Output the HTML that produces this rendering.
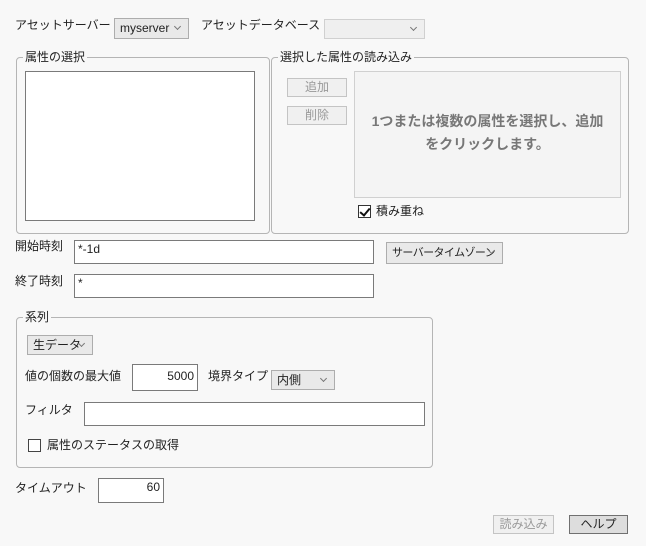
<!DOCTYPE html>
<html><head><meta charset="utf-8"><style>
body{margin:0;width:646px;height:546px;background:#f8f8f8;font-family:"Liberation Sans","Noto Sans CJK JP",sans-serif;font-size:12px;color:#222;position:relative;overflow:hidden}
.a{position:absolute;white-space:nowrap}
.lbl{line-height:16px}
.in{position:absolute;background:#fff;border:1px solid #7a7a7a;box-sizing:border-box;font-size:12px;line-height:16px;padding:0 3px}
.dd{position:absolute;background:#e9e9e9;border:1px solid #adadad;box-sizing:border-box;font-size:12px;line-height:17px;padding-left:5px;white-space:nowrap;overflow:hidden}
.dd:after{content:"";position:absolute;right:8px;top:5px;width:4px;height:4px;border-right:1px solid #777;border-bottom:1px solid #777;transform:rotate(45deg)}
.grp{position:absolute;border:1px solid #b5b5b5;border-radius:4px;box-sizing:border-box}
.gl{position:absolute;top:-9px;left:6px;background:#f8f8f8;padding:0 2px;line-height:16px}
.btn{position:absolute;box-sizing:border-box;text-align:center;font-size:12px;line-height:16px}
.cb{position:absolute;width:13px;height:13px;border:1px solid #333;background:#fff;box-sizing:border-box}
</style></head><body>
<div class="a lbl" style="left:15px;top:17px">アセットサーバー</div>
<div class="dd" style="left:114px;top:18px;width:75px;height:21px;line-height:19px">myserver</div>
<div class="a lbl" style="left:201px;top:17px">アセットデータベース</div>
<div class="dd" style="left:324px;top:19px;width:101px;height:20px;background:#efefef;border-color:#d0d0d0"></div>

<div class="grp" style="left:16px;top:57px;width:254px;height:177px"><div class="gl">属性の選択</div></div>
<div class="in" style="left:25px;top:71px;width:230px;height:150px"></div>

<div class="grp" style="left:271px;top:57px;width:358px;height:177px"><div class="gl">選択した属性の読み込み</div></div>
<div class="btn" style="left:287px;top:78px;width:60px;height:19px;border:1px solid #c4c4c4;color:#999;background:#f0f0f0">追加</div>
<div class="btn" style="left:287px;top:106px;width:60px;height:19px;border:1px solid #c4c4c4;color:#999;background:#f0f0f0">削除</div>
<div class="a" style="left:354px;top:71px;width:267px;height:127px;border:1px solid #d0d0d0;box-sizing:border-box;background:#f4f4f4;text-align:center;color:#777;font-weight:bold;font-size:14px;line-height:23px;padding-top:38px">1つまたは複数の属性を選択し、追加<br>をクリックします。</div>
<div class="cb" style="left:358px;top:205px"><div style="position:absolute;left:3px;top:0px;width:4px;height:8px;border-right:2px solid #111;border-bottom:2px solid #111;transform:rotate(40deg)"></div></div>
<div class="a lbl" style="left:376px;top:203px">積み重ね</div>

<div class="a lbl" style="left:15px;top:238px">開始時刻</div>
<div class="in" style="left:74px;top:240px;width:300px;height:24px">*-1d</div>
<div class="dd" style="left:386px;top:242px;width:117px;height:22px;line-height:20px;font-size:11px;letter-spacing:-0.6px;padding-right:20px">サーバータイムゾーン</div>
<div class="a lbl" style="left:15px;top:273px">終了時刻</div>
<div class="in" style="left:74px;top:274px;width:300px;height:24px">*</div>

<div class="grp" style="left:16px;top:317px;width:417px;height:151px"><div class="gl">系列</div></div>
<div class="dd" style="left:27px;top:335px;width:66px;height:20px;line-height:18px">生データ</div>
<div class="a lbl" style="left:25px;top:368px">値の個数の最大値</div>
<div class="in" style="left:132px;top:364px;width:66px;height:27px;text-align:right;line-height:22px">5000</div>
<div class="a lbl" style="left:208px;top:368px">境界タイプ</div>
<div class="dd" style="left:271px;top:370px;width:64px;height:20px;line-height:18px">内側</div>
<div class="a lbl" style="left:25px;top:402px">フィルタ</div>
<div class="in" style="left:84px;top:402px;width:341px;height:24px"></div>
<div class="cb" style="left:28px;top:439px;border-color:#444"></div>
<div class="a lbl" style="left:47px;top:437px">属性のステータスの取得</div>

<div class="a lbl" style="left:15px;top:480px">タイムアウト</div>
<div class="in" style="left:98px;top:478px;width:66px;height:25px;text-align:right;line-height:16px">60</div>
<div class="btn" style="left:493px;top:515px;width:61px;height:19px;border:1px solid #c4c4c4;color:#999;background:#f0f0f0">読み込み</div>
<div class="btn" style="left:569px;top:515px;width:59px;height:19px;border:1px solid #707070;background:#dddddd">ヘルプ</div>
</body></html>
